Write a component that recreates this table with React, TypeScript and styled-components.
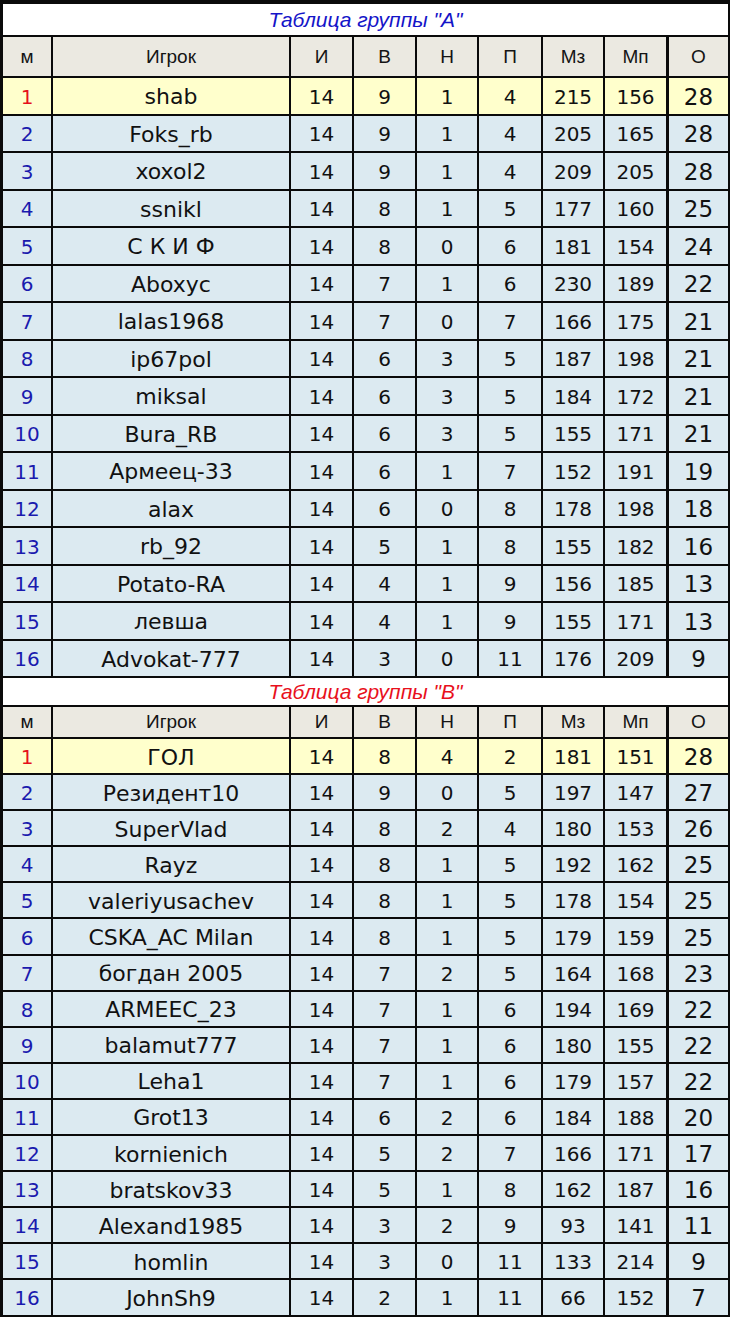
import React from "react";
import styled, { createGlobalStyle } from "styled-components";

const GlobalStyle = createGlobalStyle`
  html, body { margin: 0; padding: 0; background: #000; }
  #root { width: 730px; }
`;

type Row = [number, string, number, number, number, number, number, number, number];

const groupA: Row[] = [
  [1, "shab", 14, 9, 1, 4, 215, 156, 28],
  [2, "Foks_rb", 14, 9, 1, 4, 205, 165, 28],
  [3, "xoxol2", 14, 9, 1, 4, 209, 205, 28],
  [4, "ssnikl", 14, 8, 1, 5, 177, 160, 25],
  [5, "С К И Ф", 14, 8, 0, 6, 181, 154, 24],
  [6, "Aboxyc", 14, 7, 1, 6, 230, 189, 22],
  [7, "lalas1968", 14, 7, 0, 7, 166, 175, 21],
  [8, "ip67pol", 14, 6, 3, 5, 187, 198, 21],
  [9, "miksal", 14, 6, 3, 5, 184, 172, 21],
  [10, "Bura_RB", 14, 6, 3, 5, 155, 171, 21],
  [11, "Армеец-33", 14, 6, 1, 7, 152, 191, 19],
  [12, "alax", 14, 6, 0, 8, 178, 198, 18],
  [13, "rb_92", 14, 5, 1, 8, 155, 182, 16],
  [14, "Potato-RA", 14, 4, 1, 9, 156, 185, 13],
  [15, "левша", 14, 4, 1, 9, 155, 171, 13],
  [16, "Advokat-777", 14, 3, 0, 11, 176, 209, 9],
];

const groupB: Row[] = [
  [1, "ГОЛ", 14, 8, 4, 2, 181, 151, 28],
  [2, "Резидент10", 14, 9, 0, 5, 197, 147, 27],
  [3, "SuperVlad", 14, 8, 2, 4, 180, 153, 26],
  [4, "Rayz", 14, 8, 1, 5, 192, 162, 25],
  [5, "valeriyusachev", 14, 8, 1, 5, 178, 154, 25],
  [6, "CSKA_AC Milan", 14, 8, 1, 5, 179, 159, 25],
  [7, "богдан 2005", 14, 7, 2, 5, 164, 168, 23],
  [8, "ARMEEC_23", 14, 7, 1, 6, 194, 169, 22],
  [9, "balamut777", 14, 7, 1, 6, 180, 155, 22],
  [10, "Leha1", 14, 7, 1, 6, 179, 157, 22],
  [11, "Grot13", 14, 6, 2, 6, 184, 188, 20],
  [12, "kornienich", 14, 5, 2, 7, 166, 171, 17],
  [13, "bratskov33", 14, 5, 1, 8, 162, 187, 16],
  [14, "Alexand1985", 14, 3, 2, 9, 93, 141, 11],
  [15, "homlin", 14, 3, 0, 11, 133, 214, 9],
  [16, "JohnSh9", 14, 2, 1, 11, 66, 152, 7],
];

const headers = ["м", "Игрок", "И", "В", "Н", "П", "Мз", "Мп", "О"];

const Frame = styled.div`
  background: #0a0a0a;
  padding: 4px 2px 2px 3px;
  display: flex;
  flex-direction: column;
  gap: 2px;
  width: 730px;
  height: 1317px;
  box-sizing: border-box;
`;

const Section = styled.section`
  display: flex;
  flex-direction: column;
  gap: 2px;
`;

const Title = styled.div<{ $tone: "blue" | "red"; $h: number }>`
  height: ${(p) => p.$h}px;
  background: #ffffff;
  display: flex;
  align-items: center;
  justify-content: center;
  font-family: "Liberation Sans", Arial, sans-serif;
  font-style: italic;
  font-size: 21px;
  color: ${(p) => (p.$tone === "blue" ? "#1414c8" : "#e8101c")};
`;

const Line = styled.div<{ $h: number }>`
  display: grid;
  grid-template-columns: 48px 236px 61px 61px 60px 62px 60px 61px 60px;
  column-gap: 2px;
  height: ${(p) => p.$h}px;
`;

const HeadCell = styled.div<{ $last?: boolean }>`
  background: #ebe9e1;
  display: flex;
  align-items: center;
  justify-content: center;
  font-family: "Liberation Sans", Arial, sans-serif;
  font-size: 19px;
  color: #141414;
  border-left: ${(p) => (p.$last ? "1px solid #0a0a0a" : "none")};
`;

const Cell = styled.div<{ $lead: boolean; $last?: boolean; $size: number; $color?: string }>`
  background: ${(p) => (p.$lead ? "#ffffcc" : "#dceaf1")};
  display: flex;
  align-items: center;
  justify-content: center;
  font-family: "DejaVu Sans", Verdana, sans-serif;
  font-size: ${(p) => p.$size}px;
  color: ${(p) => p.$color ?? "#111111"};
  white-space: nowrap;
  padding-top: 2px;
  box-sizing: border-box;
  border-left: ${(p) => (p.$last ? "1px solid #0a0a0a" : "none")};
`;

function Group({
  title,
  tone,
  rows,
  titleH,
  headH,
  rowH,
}: {
  title: string;
  tone: "blue" | "red";
  rows: Row[];
  titleH: number;
  headH: number;
  rowH: number;
}) {
  return (
    <Section>
      <Title $tone={tone} $h={titleH}>
        {title}
      </Title>
      <Line $h={headH}>
        {headers.map((h, i) => (
          <HeadCell key={h} $last={i === headers.length - 1}>
            {h}
          </HeadCell>
        ))}
      </Line>
      {rows.map((r) => {
        const lead = r[0] === 1;
        return (
          <Line key={r[0]} $h={rowH}>
            <Cell $lead={lead} $size={20} $color={lead ? "#e5101c" : "#1a1aae"}>
              {r[0]}
            </Cell>
            <Cell $lead={lead} $size={22}>
              {r[1]}
            </Cell>
            {r.slice(2, 8).map((v, i) => (
              <Cell key={i} $lead={lead} $size={20}>
                {v}
              </Cell>
            ))}
            <Cell $lead={lead} $last $size={23}>
              {r[8]}
            </Cell>
          </Line>
        );
      })}
    </Section>
  );
}

export default function App() {
  return (
    <>
      <GlobalStyle />
      <Frame>
        <Group title={'Таблица группы "A"'} tone="blue" rows={groupA} titleH={31} headH={39} rowH={35.5} />
        <Group title={'Таблица группы "B"'} tone="red" rows={groupB} titleH={27} headH={30} rowH={34.1} />
      </Frame>
    </>
  );
}
